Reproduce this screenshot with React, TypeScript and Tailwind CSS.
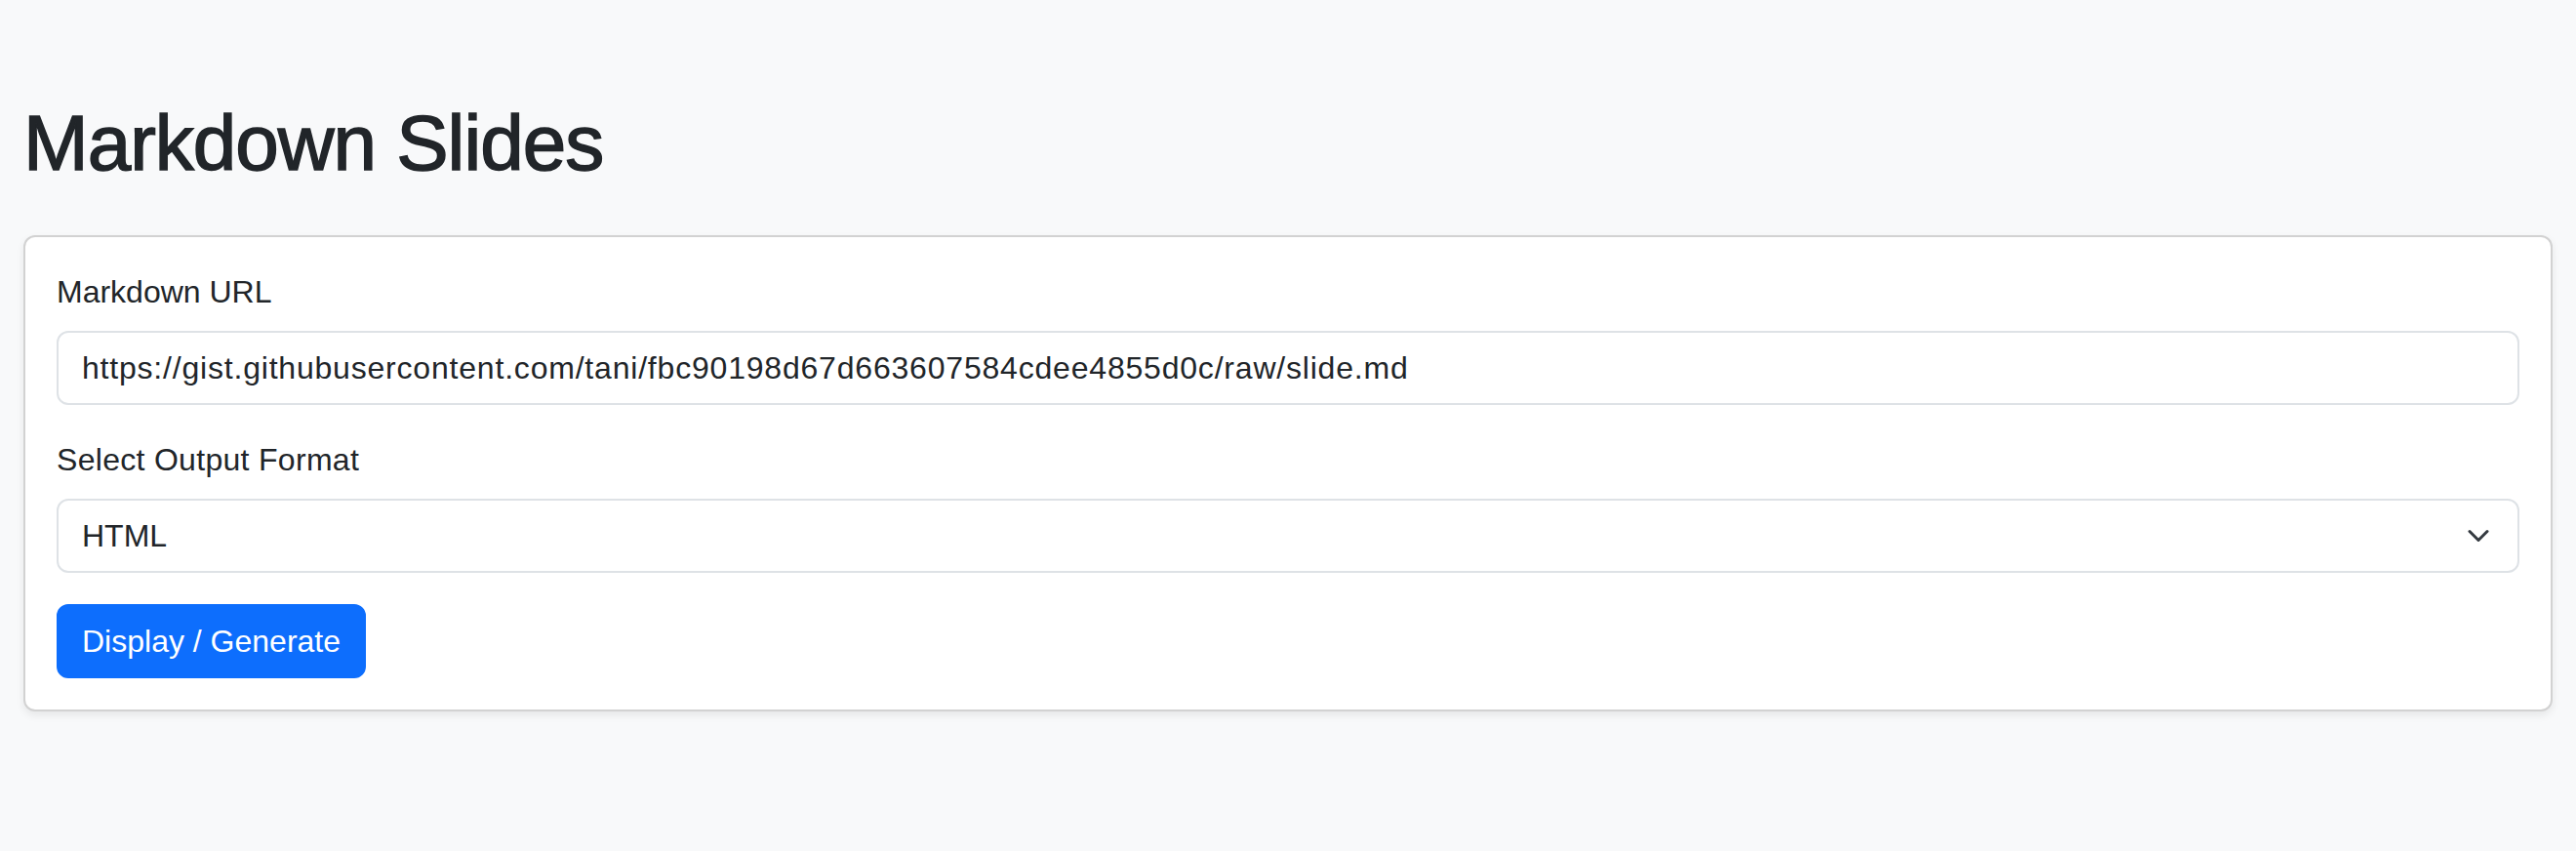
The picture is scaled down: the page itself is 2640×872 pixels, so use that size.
import { useState } from "react"

export default function App() {
  const [url, setUrl] = useState("https://gist.githubusercontent.com/tani/fbc90198d67d663607584cdee4855d0c/raw/slide.md")
  const [format, setFormat] = useState("html")

  return (
    <div className="min-h-screen bg-[#f8f9fa] px-[24px] pt-[99px] font-['Liberation_Sans',Arial,sans-serif] text-[#212529]">
      <h1 className="text-[80px] leading-[96px] font-medium tracking-[-1px] [-webkit-text-stroke:1.5px_#212529] mb-[46px]">Markdown Slides</h1>
      <div className="rounded-[12px] border-2 border-black/[.175] bg-white p-[32px] shadow-[0_4px_8px_rgba(0,0,0,0.075)]">
        <form onSubmit={e => e.preventDefault()}>
          <div className="mb-[32px]">
            <label className="block text-[32px] leading-[48px] mb-[16px]">Markdown URL</label>
            <input
              type="text"
              value={url}
              onChange={e => setUrl(e.target.value)}
              className="block w-full h-[76px] rounded-[12px] border-2 border-[#dee2e6] bg-white px-[24px] py-[12px] text-[32px] leading-[48px] tracking-[0.8px] text-[#212529] outline-none"
            />
          </div>
          <div className="mb-[32px]">
            <label className="block text-[32px] leading-[48px] tracking-[0.3px] mb-[16px]">Select Output Format</label>
            <div className="relative">
              <select
                value={format}
                onChange={e => setFormat(e.target.value)}
                className="block w-full h-[76px] appearance-none rounded-[12px] border-2 border-[#dee2e6] bg-white pl-[24px] pr-[72px] py-[12px] text-[32px] leading-[48px] text-[#212529] outline-none"
              >
                <option value="html">HTML</option>
                <option value="pdf">PDF</option>
              </select>
              <svg
                width="24"
                height="24"
                viewBox="0 0 16 16"
                className="pointer-events-none absolute right-[30px] top-1/2 -translate-y-1/2"
              >
                <path d="m2 5 6 6 6-6" fill="none" stroke="#343a40" strokeWidth="2" strokeLinecap="round" strokeLinejoin="round" />
              </svg>
            </div>
          </div>
          <button
            type="submit"
            className="rounded-[12px] border-2 border-[#0d6efd] bg-[#0d6efd] px-[24px] py-[12px] text-[32px] leading-[48px] text-white"
          >
            Display / Generate
          </button>
        </form>
      </div>
    </div>
  )
}
